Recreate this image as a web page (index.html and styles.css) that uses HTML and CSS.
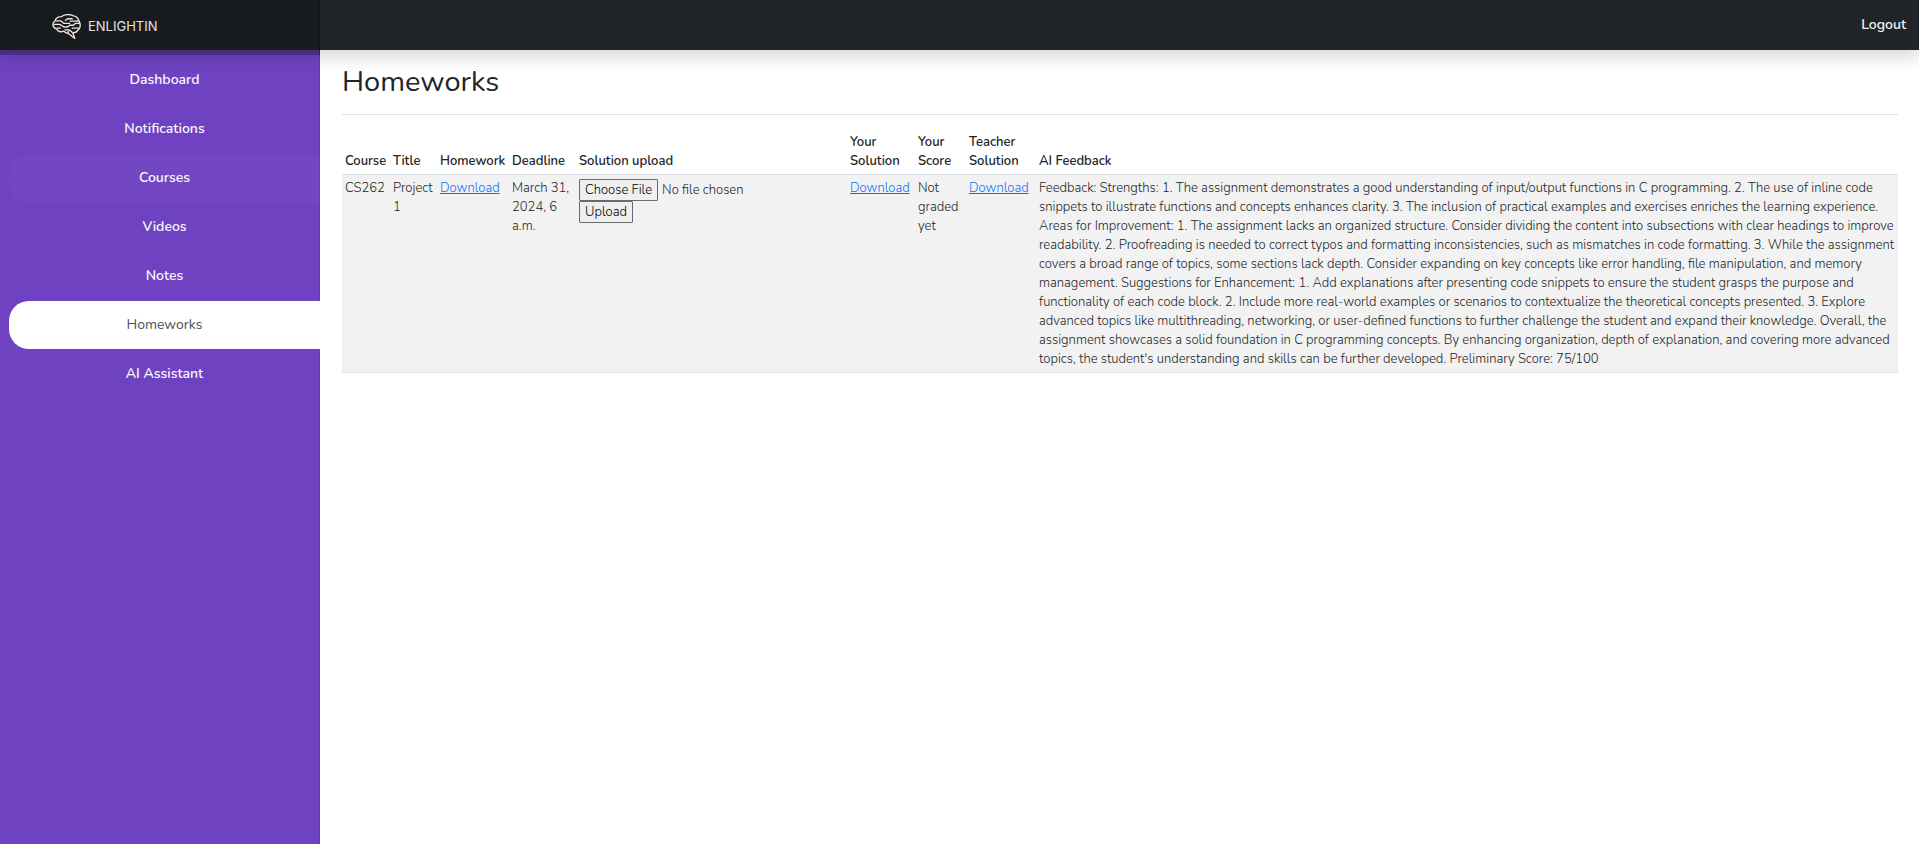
FILE: index.html
```html
<!DOCTYPE html>
<html lang="en">
<head>
<meta charset="utf-8">
<meta name="viewport" content="width=device-width, initial-scale=1">
<title>Homeworks - Enlightin</title>
<link rel="stylesheet" href="styles.css">
</head>
<body>
<header class="navbar">
  <a class="brand" href="#">
    <svg class="brand-mark" viewBox="0 0 28 24" aria-hidden="true">
      <path d="M3 6.500C4 3 7 2.500 9 2.500C12 0 18 0 20 1.500C23.500 2 25.500 4.500 26 6.500C28 10 27.500 14 25 15.500C24 17.500 22 18 20 18L22 23.500L15.500 18.500C13.500 18.500 12.500 17.500 11.500 16.500C8.500 17.500 5.500 17 4.500 14.500C0 13 0 8.500 3 6.500Z"/>
      <path d="M3 6.500H8.500L11.500 9H17.500M12.500 6.500L15 4.500H20M17 6.800H26M1.500 10H7.500L11.500 12.500H15L17 10.800H20.500L22.500 9H27M4.500 13.500H8.500M19 13.500H26M12 15.300H16.500L19.500 17.500M15.500 18.500V16"/>
    </svg>
    <span>ENLIGHTIN</span>
  </a>
  <a class="logout" href="#">Logout</a>
</header>
<div class="layout">
  <nav class="sidebar" aria-label="Main">
    <a class="side-link" href="#">Dashboard</a>
    <a class="side-link" href="#">Notifications</a>
    <a class="side-link highlighted" href="#">Courses</a>
    <a class="side-link" href="#">Videos</a>
    <a class="side-link" href="#">Notes</a>
    <a class="side-link active" href="#" aria-current="page">Homeworks</a>
    <a class="side-link" href="#">AI Assistant</a>
  </nav>
  <main class="content">
    <h1 class="title">Homeworks</h1>
    <table class="homeworks">
      <colgroup>
        <col class="col-course"><col class="col-title"><col class="col-homework"><col class="col-deadline"><col class="col-upload"><col class="col-solution"><col class="col-score"><col class="col-teacher"><col>
      </colgroup>
      <thead>
        <tr>
          <th scope="col">Course</th>
          <th scope="col">Title</th>
          <th scope="col">Homework</th>
          <th scope="col">Deadline</th>
          <th scope="col">Solution upload</th>
          <th scope="col">Your Solution</th>
          <th scope="col">Your Score</th>
          <th scope="col">Teacher Solution</th>
          <th scope="col">AI Feedback</th>
        </tr>
      </thead>
      <tbody>
        <tr>
          <td>CS262</td>
          <td>Project 1</td>
          <td><a href="#">Download</a></td>
          <td>March 31, 2024, 6 a.m.</td>
          <td>
            <form class="upload">
              <input class="file" type="file" aria-label="Solution file">
              <button class="submit" type="button">Upload</button>
            </form>
          </td>
          <td><a href="#">Download</a></td>
          <td>Not graded yet</td>
          <td><a href="#">Download</a></td>
          <td class="feedback">Feedback: Strengths: 1. The assignment demonstrates a good understanding of input/output functions in C programming. 2. The use of inline code<br>
            snippets to illustrate functions and concepts enhances clarity. 3. The inclusion of practical examples and exercises enriches the learning experience.<br>
            Areas for Improvement: 1. The assignment lacks an organized structure. Consider dividing the content into subsections with clear headings to improve<br>
            readability. 2. Proofreading is needed to correct typos and formatting inconsistencies, such as mismatches in code formatting. 3. While the assignment<br>
            covers a broad range of topics, some sections lack depth. Consider expanding on key concepts like error handling, file manipulation, and memory<br>
            management. Suggestions for Enhancement: 1. Add explanations after presenting code snippets to ensure the student grasps the purpose and<br>
            functionality of each code block. 2. Include more real-world examples or scenarios to contextualize the theoretical concepts presented. 3. Explore<br>
            advanced topics like multithreading, networking, or user-defined functions to further challenge the student and expand their knowledge. Overall, the<br>
            assignment showcases a solid foundation in C programming concepts. By enhancing organization, depth of explanation, and covering more advanced<br>
            topics, the student's understanding and skills can be further developed. Preliminary Score: 75/100</td>
        </tr>
      </tbody>
    </table>
  </main>
</div>
</body>
</html>
```
FILE: styles.css
```css
* { box-sizing: border-box; }

body {
  margin: 0;
  min-height: 100vh;
  display: flex;
  flex-direction: column;
  background: #fff;
  color: #212529;
  font-family: Nunito, Lato, sans-serif;
  font-size: 13px;
  line-height: 19px;
}

.navbar {
  position: relative;
  z-index: 1;
  display: flex;
  align-items: center;
  justify-content: space-between;
  height: 50px;
  background: #212529;
  box-shadow: 0 8px 16px rgba(0, 0, 0, .15);
}

.brand {
  display: flex;
  align-items: center;
  align-self: flex-start;
  gap: 7px;
  width: 320px;
  height: 55px;
  flex: none;
  padding: 0 52px 2px;
  background: rgba(0, 0, 0, .25);
  box-shadow: inset -1px 0 0 rgba(0, 0, 0, .25);
  color: #e6e2e2;
  font-family: Inter, sans-serif;
  font-size: 13px;
  text-decoration: none;
}

.brand-mark {
  width: 29px;
  height: 25px;
  fill: none;
  stroke: #f1e4dc;
  stroke-width: 1.3;
  stroke-linejoin: round;
}

.logout {
  padding: 0 13px 2px;
  color: #f4f5f5;
  font-size: 14px;
  font-weight: 600;
  text-decoration: none;
}

.layout { display: flex; flex: 1; }

.sidebar {
  display: flex;
  flex: none;
  flex-direction: column;
  gap: 1px;
  width: 320px;
  padding: 6px 0 0 9px;
  background: #6f42c1;
  box-shadow: inset -1px 0 0 rgba(0, 0, 0, .1);
}

.side-link {
  padding: 12px;
  border-radius: 20px 0 0 20px;
  color: #f8f9fa;
  font-size: 14px;
  font-weight: 600;
  line-height: 24px;
  text-align: center;
  text-decoration: none;
}

.side-link.highlighted { background: rgba(255, 255, 255, .03); }
.side-link.active { background: #fff; color: #495057; font-weight: 400; }

.content {
  flex: 1;
  min-width: 0;
  padding: 15px 21px 24px 22px;
}

.title {
  margin: 0 0 15px;
  padding-bottom: 15px;
  border-bottom: 1px solid #dee2e6;
  font-size: 29px;
  font-weight: 400;
  line-height: 34px;
}

.homeworks {
  width: 100%;
  table-layout: fixed;
  border-collapse: collapse;
}

.col-course { width: 48px; }
.col-title { width: 47px; }
.col-homework { width: 72px; }
.col-deadline { width: 67px; }
.col-upload { width: 271px; }
.col-solution { width: 68px; }
.col-score { width: 51px; }
.col-teacher { width: 70px; }

.homeworks th,
.homeworks td {
  padding: 4px 3px 3px;
  border-bottom: 1px solid #dee2e6;
  text-align: left;
}

.homeworks th { padding-top: 3px; font-weight: 600; vertical-align: bottom; }

.homeworks td {
  background: #f2f2f2;
  color: #212529;
  font-weight: 300;
  vertical-align: top;
}

.homeworks td a { color: #0d6efd; }
.homeworks .feedback { white-space: nowrap; }

.upload { display: flex; flex-direction: column; align-items: flex-start; }

.file { width: 100%; color: inherit; font: inherit; }

.file::file-selector-button,
.submit {
  height: 22px;
  margin: 0 4px 0 0;
  padding: 0 5px;
  border: 1px solid #6b6b6b;
  border-radius: 1px;
  background: #efefef;
  color: #000;
  font: inherit;
}
```
